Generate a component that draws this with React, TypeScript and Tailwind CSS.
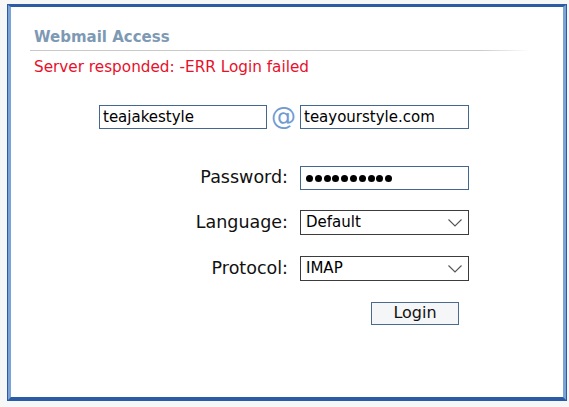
const font = { fontFamily: '"DejaVu Sans", Verdana, sans-serif' };

const Chevron = () => (
  <svg width="16" height="10" viewBox="0 0 16 10" className="mr-[5px]">
    <path d="M1.5 1.5 L8 8 L14.5 1.5" fill="none" stroke="#555" strokeWidth="1.1" />
  </svg>
);

const FakeSelect = ({ value }: { value: string }) => (
  <div className="w-[169px] h-[25px] border border-[#3c3c3c] bg-white flex items-center justify-between pl-[5px] text-[15px] text-black">
    <span>{value}</span>
    <Chevron />
  </div>
);

const Row = ({ label, children }: { label: string; children: React.ReactNode }) => (
  <div className="flex items-center">
    <div className="w-[278px] pr-[1px] text-right text-[17.5px] leading-none text-[#111]">{label}</div>
    <div className="ml-[11px]">{children}</div>
  </div>
);

export default function App() {
  return (
    <div className="min-h-screen bg-[#f6f7f7] pt-[4px] pl-[7px]" style={font}>
      <div className="w-[560px] h-[397px] border border-[#2b5ba5]">
        <div className="h-full bg-white border-t-[2px] border-b-[3px] border-x-[3px] border-t-[#2b5ba5] border-b-[#2b5ba5] border-x-[#7aa4d6]">
          <div className="pt-[21px] pl-[23px]">
            <div className="text-[15px] leading-[18px] font-bold text-[#7d99b4]">Webmail Access</div>
            <div className="mt-[4px] -ml-[4px] w-[500px] h-px bg-linear-to-r from-[#c8c8c8] via-[#cacaca] via-90% to-white" />
            <div className="mt-[7px] text-[15.25px] leading-[18px] text-[#e8102a]">Server responded: -ERR Login failed</div>
          </div>

          <div className="mt-[29px] ml-[88px] flex items-center">
            <input
              readOnly
              value="teajakestyle"
              className="w-[168px] h-[24px] border border-[#44678f] px-[3px] text-[15px] text-black outline-none"
              style={font}
            />
            <div className="w-[33px] text-center text-[25px] leading-none text-[#6f9bd2] -mt-[2px]">@</div>
            <input
              readOnly
              value="teayourstyle.com"
              className="w-[169px] h-[24px] border border-[#44678f] px-[3px] text-[15px] text-black outline-none"
              style={font}
            />
          </div>

          <div className="mt-[37px]">
            <Row label="Password:">
              <div className="w-[169px] h-[24px] border border-[#44678f] pl-[5px] flex items-center">
                {Array.from({ length: 10 }).map((_, i) => (
                  <span key={i} className="w-[7px] h-[7px] rounded-full bg-black mr-[1.8px]" />
                ))}
              </div>
            </Row>
          </div>
          <div className="mt-[20px]">
            <Row label="Language:">
              <FakeSelect value="Default" />
            </Row>
          </div>
          <div className="mt-[21px]">
            <Row label="Protocol:">
              <FakeSelect value="IMAP" />
            </Row>
          </div>

          <div className="mt-[20px] ml-[360px]">
            <button className="w-[88px] h-[23px] border border-[#4a6a90] bg-[#f5f6f7] text-[16px] leading-none text-[#111]" style={font}>
              Login
            </button>
          </div>
        </div>
      </div>
    </div>
  );
}
